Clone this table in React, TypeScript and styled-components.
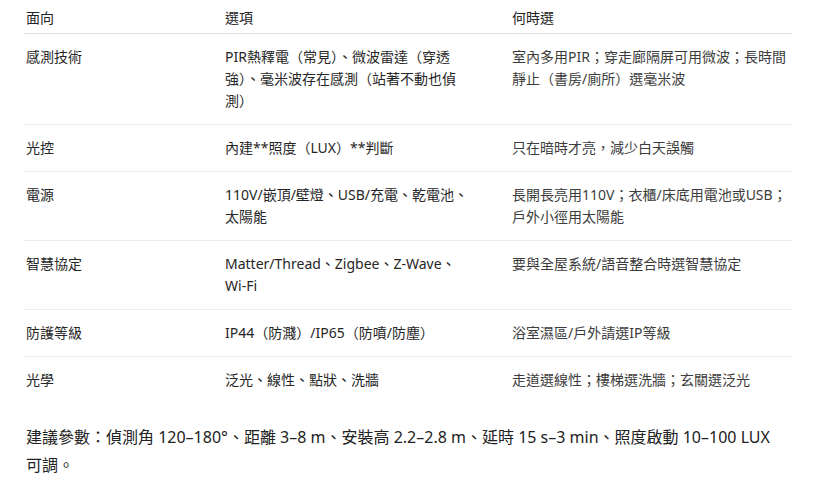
import React from "react";
import styled, { createGlobalStyle } from "styled-components";

const Global = createGlobalStyle`
  html, body { margin: 0; padding: 0; background: #ffffff; }
  body {
    font-family: "Noto Sans", "Noto Sans CJK TC", sans-serif;
    color: #333333;
  }
  *, *::before, *::after { box-sizing: border-box; }
`;

const Page = styled.div`
  padding: 0 24px;
  width: 816px;
`;

const Table = styled.table`
  width: 768px;
  border-collapse: collapse;
  table-layout: fixed;
  font-size: 14px;
  line-height: 22px;
`;

const Th = styled.th<{ $w: number; $pr: number }>`
  width: ${(p) => p.$w}px;
  text-align: left;
  font-weight: 400;
  color: #222222;
  padding: 7px ${(p) => p.$pr}px 4px 2px;
  border-bottom: 1px solid #dedede;
  vertical-align: top;
`;

const Row = styled.tr<{ $last?: boolean }>`
  border-bottom: ${(p) => (p.$last ? "none" : "1px solid #ececec")};
`;

const Td = styled.td<{ $pr: number; $tone?: "dark" | "mid" }>`
  padding: 12px ${(p) => p.$pr}px 12px 2px;
  vertical-align: top;
  color: ${(p) => (p.$tone === "mid" ? "#3c3c3c" : "#262626")};
`;

const Note = styled.p`
  margin: 20px 0 0;
  padding-left: 2px;
  width: 768px;
  font-size: 16px;
  line-height: 28px;
  color: #222222;
`;

const Keep = styled.span`
  white-space: nowrap;
`;

const cols = [
  { w: 199, pr: 28 },
  { w: 287, pr: 34 },
  { w: 282, pr: 0 },
];

const rows: [string, string, string][] = [
  [
    "感測技術",
    "PIR熱釋電（常見）、微波雷達（穿透強）、毫米波存在感測（站著不動也偵測）",
    "室內多用PIR；穿走廊隔屏可用微波；長時間靜止（書房/廁所）選毫米波",
  ],
  ["光控", "內建**照度（LUX）**判斷", "只在暗時才亮，減少白天誤觸"],
  [
    "電源",
    "110V/嵌頂/壁燈、USB/充電、乾電池、太陽能",
    "長開長亮用110V；衣櫃/床底用電池或USB；戶外小徑用太陽能",
  ],
  [
    "智慧協定",
    "Matter/Thread、Zigbee、Z-Wave、Wi-Fi",
    "要與全屋系統/語音整合時選智慧協定",
  ],
  ["防護等級", "IP44（防濺）/IP65（防噴/防塵）", "浴室濕區/戶外請選IP等級"],
  ["光學", "泛光、線性、點狀、洗牆", "走道選線性；樓梯選洗牆；玄關選泛光"],
];

const heads = ["面向", "選項", "何時選"];

export default function App() {
  return (
    <Page>
      <Global />
      <Table>
        <thead>
          <tr>
            {heads.map((h, i) => (
              <Th key={h} $w={cols[i].w} $pr={cols[i].pr}>
                {h}
              </Th>
            ))}
          </tr>
        </thead>
        <tbody>
          {rows.map((r, i) => (
            <Row key={r[0]} $last={i === rows.length - 1}>
              <Td $pr={cols[0].pr}>{r[0]}</Td>
              <Td $pr={cols[1].pr}>{r[1]}</Td>
              <Td $pr={cols[2].pr} $tone="mid">
                {r[2]}
              </Td>
            </Row>
          ))}
        </tbody>
      </Table>
      <Note>
        建議參數：偵測角 120–180°、距離 3–8 m、安裝高 2.2–2.8 m、延時 15 s–3 min、照度啟動 10–100 LUX <Keep>可調。</Keep>
      </Note>
    </Page>
  );
}
